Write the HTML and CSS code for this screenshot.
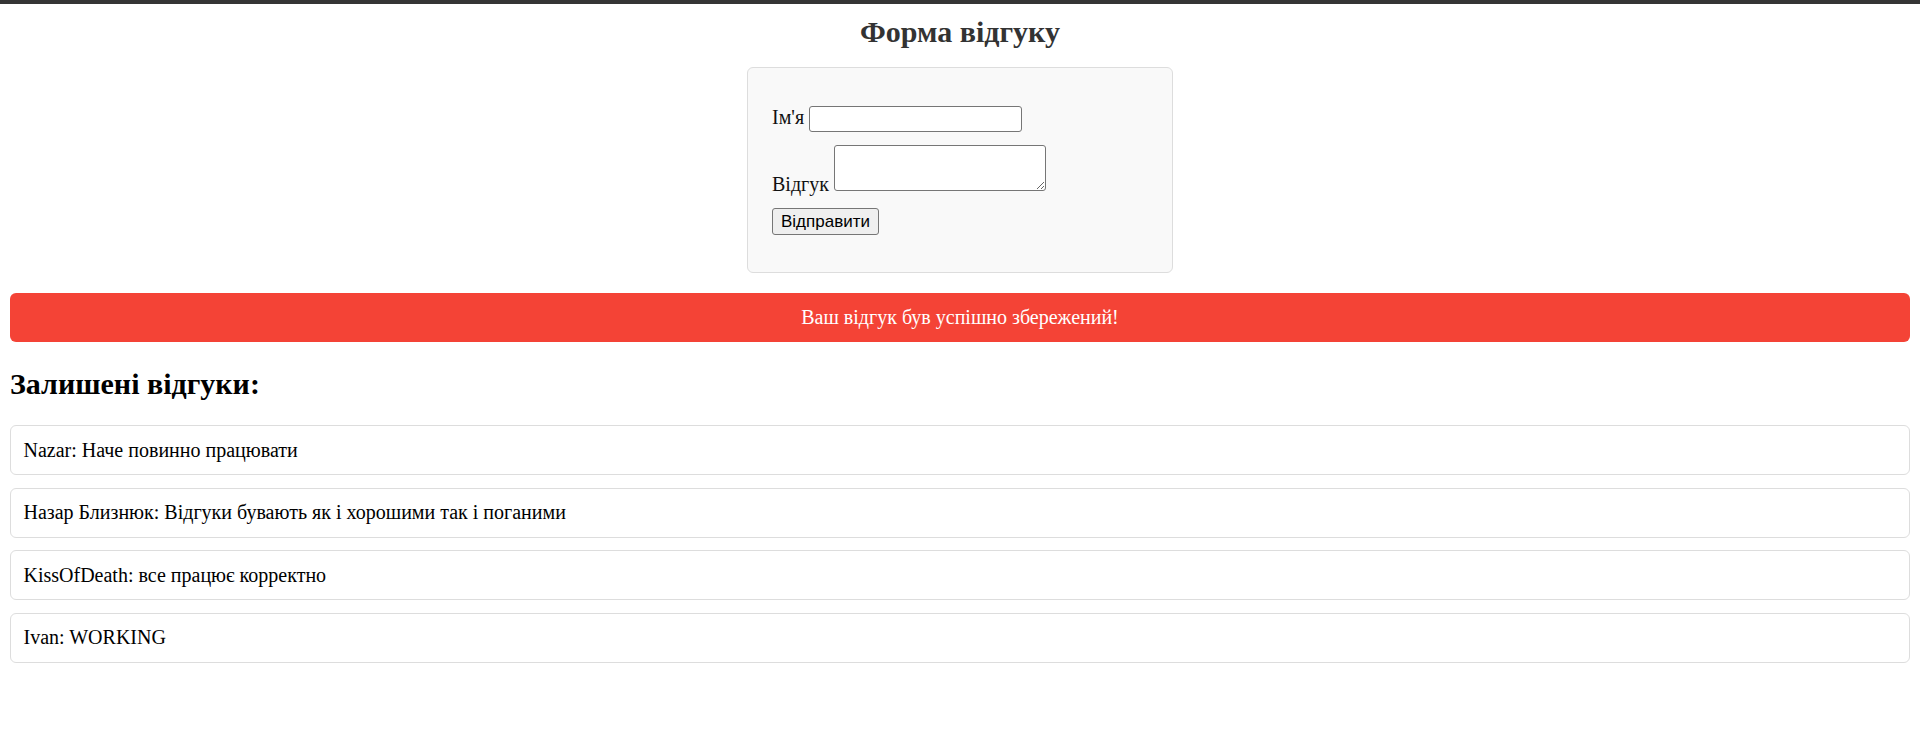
FILE: index.html
```html
<!DOCTYPE html>
<html lang="uk">
<head>
<meta charset="utf-8">
<title>Форма відгуку</title>
<link rel="stylesheet" href="styles.css">
</head>
<body>
<div class="topbar"></div>
<h1 class="title">Форма відгуку</h1>
<div class="form-box">
  <form class="feedback-form">
    <div class="row"><label for="name">Ім'я</label> <input type="text" id="name" class="field-input"></div>
    <div class="row"><label for="msg">Відгук</label> <textarea id="msg" class="field-area"></textarea></div>
    <div class="row row-btn"><button type="button" class="submit-btn">Відправити</button></div>
  </form>
</div>
<div class="alert">Ваш відгук був успішно збережений!</div>
<h2 class="section-title">Залишені відгуки:</h2>
<div class="reviews">
  <div class="review">Nazar: Наче повинно працювати</div>
  <div class="review">Назар Близнюк: Відгуки бувають як і хорошими так і поганими</div>
  <div class="review">KissOfDeath: все працює корректно</div>
  <div class="review">Ivan: WORKING</div>
</div>
</body>
</html>
```

FILE: styles.css
```css
html, body {
  margin: 0;
  padding: 0;
  background: #fff;
}
body {
  font-family: "Liberation Serif", "Times New Roman", serif;
  font-size: 20px;
  color: #000;
}
.topbar {
  height: 4px;
  background: #353535;
}
.title {
  font-size: 30px;
  font-weight: bold;
  color: #333;
  text-align: center;
  margin: 11px 0 18px;
}
.form-box {
  width: 426px;
  box-sizing: border-box;
  margin: 0 auto;
  background: #f9f9f9;
  border: 1px solid #dddddd;
  border-radius: 6px;
  padding: 25px 24px;
}
.feedback-form {
  display: flex;
  flex-direction: column;
  gap: 13px;
  padding: 13px 0 12px;
}
.row {
  line-height: normal;
  color: #111;
}
.row-btn {
  margin-top: -1px;
}
.field-input {
  box-sizing: border-box;
  width: 213px;
  height: 26px;
  border: 1px solid #767676;
  border-radius: 3px;
  padding: 1px 3px;
  font-family: "Liberation Sans", Arial, sans-serif;
  font-size: 16.67px;
  background: #fff;
  margin: 0;
}
.field-area {
  box-sizing: border-box;
  width: 212px;
  height: 46px;
  border: 1px solid #767676;
  border-radius: 3px;
  padding: 2px;
  font-family: "Liberation Mono", monospace;
  font-size: 16.67px;
  background: #fff;
  margin: 0;
  vertical-align: baseline;
}
.submit-btn {
  box-sizing: border-box;
  height: 27px;
  padding: 1px 8px;
  border: 1px solid #767676;
  border-radius: 3px;
  background: #efefef;
  font-family: "Liberation Sans", Arial, sans-serif;
  font-size: 17px;
  color: #000;
  margin: 0;
}
.alert {
  margin: 20px 10px 0;
  background: #f44336;
  color: #fff;
  text-align: center;
  padding: 13px;
  border-radius: 6px;
  line-height: normal;
}
.section-title {
  font-size: 30px;
  font-weight: bold;
  margin: 25px 10px 24px;
}
.reviews {
  display: flex;
  flex-direction: column;
  gap: 12.5px;
  margin: 0 10px;
}
.review {
  border: 1px solid #dddddd;
  border-radius: 6px;
  padding: 12.5px;
  background: #fff;
}
```
